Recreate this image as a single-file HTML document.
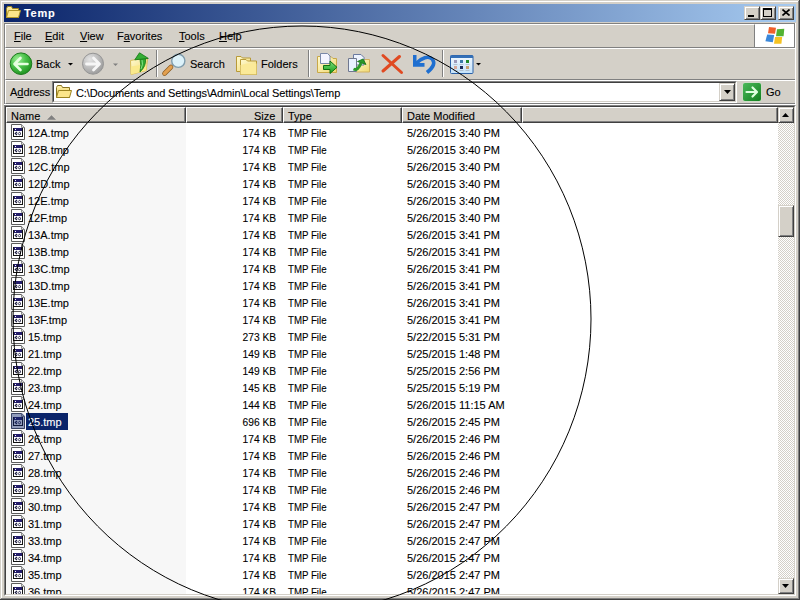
<!DOCTYPE html>
<html><head><meta charset="utf-8">
<style>
*{margin:0;padding:0;box-sizing:border-box}
html,body{width:800px;height:600px;overflow:hidden}
body{position:relative;background:#D4D0C8;font-family:"Liberation Sans",sans-serif;font-size:11px;color:#000;-webkit-text-stroke:0.1px currentColor}
.a{position:absolute}
.t{position:absolute;white-space:nowrap;line-height:13px;height:13px}
.u{text-decoration:underline}
.row{position:absolute;left:6px;width:772px;height:17px}
.row .ico{position:absolute;left:4px;top:1px}
.row span{position:absolute;top:4px;line-height:13px;white-space:nowrap}
.nm{left:22px;padding:0 1px 0 0}
.nm.s{color:#fff}
.selbox{position:absolute;left:20px;top:1px;width:42px;height:17px;background:#0A246A}
.tint{position:absolute;left:4px;top:1px}
.sz{right:502px;text-align:right;transform:scaleX(0.93);transform-origin:100% 50%}
.tp{left:282px;transform:scaleX(0.88);transform-origin:0 50%}
.dt{left:401px}
.hd{position:absolute;top:107px;height:16px;border-top:1px solid #fff;border-left:1px solid #fff;border-bottom:1px solid #404040;border-right:1px solid #404040;box-shadow:inset -1px -1px 0 #808080}
.btn{position:absolute;background:#D4D0C8;border:1px solid;border-color:#D4D0C8 #404040 #404040 #D4D0C8;box-shadow:inset 1px 1px 0 #fff,inset -1px -1px 0 #808080}
.sep{position:absolute;width:2px;border-left:1px solid #808080;border-right:1px solid #fff}
</style></head>
<body>
<svg width="0" height="0" style="position:absolute">
<defs>
<linearGradient id="yel" x1="0" y1="0" x2="0" y2="1"><stop offset="0" stop-color="#FFF3B0"/><stop offset="1" stop-color="#E8C24A"/></linearGradient>
<symbol id="fi" viewBox="0 0 16 16">
<path d="M1.5 0.5H11.5L14.5 3.5V15.5H1.5Z" fill="#fff" stroke="#5c5c5c"/>
<path d="M11.5 0.5V3.5H14.5" fill="#dcdcdc" stroke="#8a8a8a"/>
<g shape-rendering="crispEdges">
<rect x="3" y="4" width="10" height="9" fill="#fff"/>
<rect x="3" y="4" width="10" height="3" fill="#231C6A"/>
<rect x="5" y="5" width="1" height="1" fill="#fff"/>
<rect x="3" y="12" width="10" height="1" fill="#111"/>
<rect x="3" y="4" width="1" height="9" fill="#111"/>
<rect x="12" y="4" width="1" height="9" fill="#111"/>
</g>
<path d="M7 8L5.2 9.5L7 11" fill="none" stroke="#1a1a40" stroke-width="1.1"/>
<path d="M9.5 8.2L11 9.6L9.5 11L8.1 9.6Z" fill="none" stroke="#1a1a40" stroke-width="1"/>
</symbol>
</defs>
</svg>

<!-- window frame -->
<div class="a" style="left:1px;top:1px;width:797px;height:1px;background:#fff"></div>
<div class="a" style="left:1px;top:1px;width:1px;height:597px;background:#fff"></div>
<div class="a" style="left:798px;top:1px;width:1px;height:598px;background:#808080"></div>
<div class="a" style="left:799px;top:0;width:1px;height:600px;background:#404040"></div>
<div class="a" style="left:1px;top:598px;width:798px;height:1px;background:#808080"></div>
<div class="a" style="left:0;top:599px;width:800px;height:1px;background:#404040"></div>

<!-- title bar -->
<div class="a" style="left:4px;top:4px;width:792px;height:18px;background:linear-gradient(to right,#0A246A,#A6CAF0)"></div>
<svg class="a" style="left:5px;top:5px" width="17" height="15" viewBox="0 0 17 15">
<path d="M1.5 3.5L2.5 1.5H6.5L7.5 3.5H13.5V12.5H1.5Z" fill="url(#yel)" stroke="#9C8420"/>
<path d="M1.5 12.5L3.5 5.5H15.5L13.5 12.5Z" fill="#FCE68A" stroke="#B0962A"/>
</svg>
<div class="t" style="left:24px;top:7px;color:#fff;font-weight:bold;letter-spacing:0.7px">Temp</div>
<div class="btn" style="left:744px;top:6px;width:16px;height:14px"><div class="a" style="left:3px;top:8px;width:6px;height:2px;background:#000"></div></div>
<div class="btn" style="left:760px;top:6px;width:16px;height:14px"><div class="a" style="left:2px;top:1px;width:9px;height:9px;border:1px solid #000;border-top-width:2px"></div></div>
<div class="btn" style="left:778px;top:6px;width:16px;height:14px"><svg class="a" style="left:3px;top:2px" width="8" height="7"><path d="M0.5 0.5L7.5 6.5M7.5 0.5L0.5 6.5" stroke="#000" stroke-width="1.6"/></svg></div>

<!-- rebar sunken border -->
<div class="a" style="left:4px;top:23px;width:792px;height:1px;background:#808080"></div>
<div class="a" style="left:4px;top:23px;width:1px;height:81px;background:#808080"></div>
<div class="a" style="left:795px;top:23px;width:1px;height:82px;background:#fff"></div>
<div class="a" style="left:4px;top:104px;width:792px;height:1px;background:#fff"></div>
<!-- bands -->
<div class="a" style="left:5px;top:24px;width:750px;height:24px;border-top:1px solid #fff;border-left:1px solid #fff;border-bottom:1px solid #808080;border-right:1px solid #808080"></div>
<div class="a" style="left:5px;top:48px;width:790px;height:32px;border-top:1px solid #fff;border-left:1px solid #fff;border-bottom:1px solid #808080"></div>
<div class="a" style="left:5px;top:80px;width:790px;height:24px;border-top:1px solid #fff;border-left:1px solid #fff;border-bottom:1px solid #808080"></div>

<!-- menu -->
<div class="t" style="left:14px;top:30px"><span class="u">F</span>ile</div>
<div class="t" style="left:45px;top:30px"><span class="u">E</span>dit</div>
<div class="t" style="left:80px;top:30px"><span class="u">V</span>iew</div>
<div class="t" style="left:117px;top:30px">F<span class="u">a</span>vorites</div>
<div class="t" style="left:179px;top:30px"><span class="u">T</span>ools</div>
<div class="t" style="left:219px;top:30px"><span class="u">H</span>elp</div>
<!-- throbber -->
<div class="a" style="left:755px;top:23px;width:40px;height:25px;background:#fff;border-top:1px solid #808080;border-bottom:1px solid #808080;border-right:1px solid #808080"></div>
<svg class="a" style="left:760px;top:22px" width="30" height="26" viewBox="0 0 30 26">
<path d="M9 5L16 5.8L15 11.8L8 11.2Z" fill="#F0602C"/>
<path d="M17 7.3L24.3 6.8L23.6 14.2L16 14.2Z" fill="#52B232"/>
<path d="M7.2 12.4L14.2 13L12.8 20.2L5.4 19.3Z" fill="#3B88DA"/>
<path d="M15 14.9L22.2 14.9L21.4 21.7L14 21.7Z" fill="#F5C222"/>
</svg>

<!-- toolbar -->
<svg class="a" style="left:0;top:0" width="500" height="80" viewBox="0 0 500 80">
<defs>
<radialGradient id="gb" cx="0.35" cy="0.3" r="0.75"><stop offset="0" stop-color="#A0F098"/><stop offset="0.5" stop-color="#48C048"/><stop offset="1" stop-color="#1E901E"/></radialGradient>
<radialGradient id="gg" cx="0.35" cy="0.3" r="0.75"><stop offset="0" stop-color="#E4E4E4"/><stop offset="0.5" stop-color="#C0C0C0"/><stop offset="1" stop-color="#9A9A9A"/></radialGradient>
<linearGradient id="fy" x1="0" y1="0" x2="1" y2="1"><stop offset="0" stop-color="#FFFAD0"/><stop offset="1" stop-color="#F0D870"/></linearGradient>
<linearGradient id="gr" x1="0" y1="0" x2="0" y2="1"><stop offset="0" stop-color="#7FE07F"/><stop offset="1" stop-color="#169C16"/></linearGradient>
<linearGradient id="gbx" x1="0" y1="0" x2="1" y2="1"><stop offset="0" stop-color="#4FBF5F"/><stop offset="1" stop-color="#13802A"/></linearGradient>
</defs>
<!-- back -->
<circle cx="21" cy="63.7" r="10.8" fill="url(#gb)" stroke="#1D7A1D" stroke-width="1"/>
<path d="M27.5 64H15M20.5 58L14.5 64L20.5 70" fill="none" stroke="#E6FFE0" stroke-width="2.6" stroke-linecap="round" stroke-linejoin="round"/>
<path d="M68 63H73L70.5 65.5Z" fill="#000"/>
<!-- forward -->
<circle cx="93" cy="63.7" r="10.5" fill="url(#gg)" stroke="#959595" stroke-width="1"/>
<path d="M86.5 64H99M93.5 58L99.5 64L93.5 70" fill="none" stroke="#F6F6F6" stroke-width="2.8" stroke-linecap="round" stroke-linejoin="round"/>
<path d="M113 63.5H118L115.5 66Z" fill="#808080"/>
<!-- up -->
<path d="M130.5 60.5L136 59.5L147.5 58.8L146.2 70.5L131 74.5Z" fill="url(#fy)" stroke="#D8BC58" stroke-width="1"/>
<path d="M131 66.5L146.5 64L146.2 70.5L131 74.5Z" fill="#FAE98C"/>
<path d="M140 59L145.5 58.5Q146.5 66 140 72Q141.5 65 140 59Z" fill="#2FA82F" stroke="#177A17" stroke-width="0.8" stroke-linejoin="round"/>
<path d="M142 60Q143.5 64 141 69" fill="none" stroke="#88E088" stroke-width="1"/>
<path d="M139.5 52.8L134.8 59.8L148.3 58.4Z" fill="#34AE34" stroke="#187C18" stroke-width="0.9" stroke-linejoin="round"/>
<!-- sep -->
<rect x="156" y="50" width="1" height="27" fill="#808080"/><rect x="157" y="50" width="1" height="27" fill="#fff"/>
<!-- search -->
<path d="M164.5 73.5L171 67" stroke="#8A5A20" stroke-width="4.6" stroke-linecap="round"/>
<path d="M164.5 73.5L171 67" stroke="#E2A050" stroke-width="3.2" stroke-linecap="round"/>
<circle cx="178.3" cy="60.8" r="6.6" fill="#DDF2FA" stroke="#7F9CAC" stroke-width="1.4"/>
<!-- folders -->
<path d="M236.5 56.5H241L242.5 58H250.5V71.5H236.5Z" fill="url(#fy)" stroke="#B89A38" stroke-width="1"/>
<path d="M240.5 59.5H246L247.5 61H256.5V74.5H240.5Z" fill="url(#fy)" stroke="#B89A38" stroke-width="1"/>
<path d="M240.5 65L247 63.5H256.5V74.5H240.5Z" fill="#FBEA98"/>
<!-- sep -->
<rect x="308" y="50" width="1" height="27" fill="#808080"/><rect x="309" y="50" width="1" height="27" fill="#fff"/>
<!-- move to -->
<path d="M317.5 56.5H331L333 58.5H336.5V72.5H317.5Z" fill="url(#fy)" stroke="#C8A848" stroke-width="1"/>
<path d="M320.5 53.5H327.5L330 56V63.5H320.5Z" fill="#F4F4FF" stroke="#7A88A8" stroke-width="1"/>
<path d="M323.5 65.5H330V61L337 67.3L330 73.5V69.5H323.5Z" fill="url(#gr)" stroke="#107010" stroke-width="1" stroke-linejoin="round"/>
<!-- copy to -->
<path d="M355.5 59.5H369.5V72H355.5Z" fill="url(#fy)" stroke="#D0B060" stroke-width="1"/>
<path d="M353.5 54.5H361L364 57.5V65H353.5Z" fill="#EEF4FF" stroke="#6A7AA0" stroke-width="1"/>
<path d="M348.5 58.5H356.5V71.5H348.5Z" fill="#E8F2FF" stroke="#707890" stroke-width="1"/>
<path d="M353.5 69Q358 71 361 63" fill="none" stroke="#2A9A2A" stroke-width="3"/>
<path d="M357.5 61.5L363 59L366 64.5Z" fill="#2A9A2A" stroke="#107010" stroke-width="0.8"/>
<!-- delete -->
<path d="M383 55.5L401.5 72.5M399.5 56.5L383 71" stroke="#E04A22" stroke-width="3" stroke-linecap="round"/>
<!-- undo -->
<path d="M416 63.5C421 58 429 55 432.5 59.5C435.5 63.5 432 68.5 427 72.5" fill="none" stroke="#1F6FD0" stroke-width="3.6"/>
<path d="M413 55H416.5V63H424.5V66.8H413Z" fill="#1F6FD0"/>
<!-- sep -->
<rect x="442" y="50" width="1" height="27" fill="#808080"/><rect x="443" y="50" width="1" height="27" fill="#fff"/>
<!-- views -->
<linearGradient id="vw" x1="0" y1="0" x2="0" y2="1"><stop offset="0" stop-color="#F2F9FF"/><stop offset="1" stop-color="#C4E2FA"/></linearGradient>
<rect x="450.5" y="55.5" width="22.5" height="18" rx="1" fill="url(#vw)" stroke="#2C62A8" stroke-width="1"/>
<rect x="450.5" y="55.5" width="22.5" height="2.5" fill="#3470B8"/>
<rect x="454" y="60" width="3" height="3" fill="#9C9ABA"/><rect x="460" y="60" width="3" height="3" fill="#3A7AA8"/><rect x="466" y="60" width="3" height="3" fill="#1F8A2A"/>
<rect x="454" y="66" width="3" height="3" fill="#D8A898"/><rect x="460" y="66" width="3" height="3" fill="#1A2A5A"/><rect x="466" y="66" width="3" height="3" fill="#C8A070"/>
<g fill="#A8B8C8"><rect x="453.5" y="64" width="4" height="0.8"/><rect x="459.5" y="64" width="4" height="0.8"/><rect x="465.5" y="64" width="4" height="0.8"/><rect x="453.5" y="70" width="4" height="0.8"/><rect x="459.5" y="70" width="4" height="0.8"/><rect x="465.5" y="70" width="4" height="0.8"/></g>
<path d="M476 63H481L478.5 65.5Z" fill="#000"/>
</svg>
<div class="t" style="left:36px;top:58px">Back</div>
<div class="t" style="left:190px;top:58px">Search</div>
<div class="t" style="left:261px;top:58px">Folders</div>

<!-- address bar -->
<div class="t" style="left:10px;top:86px">A<span class="u">d</span>dress</div>
<div class="a" style="left:52px;top:81px;width:685px;height:22px;background:#fff;border-top:1px solid #808080;border-left:1px solid #808080;border-bottom:1px solid #fff;border-right:1px solid #fff"></div>
<div class="a" style="left:53px;top:82px;width:683px;height:20px;border-top:1px solid #404040;border-left:1px solid #404040;border-bottom:1px solid #D4D0C8;border-right:1px solid #D4D0C8"></div>
<svg class="a" style="left:55px;top:84px" width="18" height="15" viewBox="0 0 18 15">
<path d="M1.5 3.5L2.5 1.5H6.5L7.5 3.5H14.5V13.5H1.5Z" fill="url(#yel)" stroke="#8A7420"/>
<path d="M1.5 13.5L3.5 6.5H16.5L14.5 13.5Z" fill="#FCE68A" stroke="#9C8420"/>
</svg>
<div class="t" style="left:76px;top:87px;letter-spacing:-0.12px">C:\Documents and Settings\Admin\Local Settings\Temp</div>
<div class="btn" style="left:719px;top:83px;width:16px;height:18px"><svg class="a" style="left:4px;top:6px" width="7" height="4"><path d="M0 0H7L3.5 4Z" fill="#000"/></svg></div>
<svg class="a" style="left:742px;top:82px" width="20" height="20" viewBox="0 0 20 20">
<rect x="0.5" y="0.5" width="19" height="19" rx="2.5" fill="#C8F0C8" opacity="0.7"/>
<rect x="1" y="1" width="18" height="18" rx="2" fill="url(#gbx2)"/>
<path d="M4.5 10H14.5M10.5 5.5L15 10L10.5 14.5" fill="none" stroke="#DFFFDF" stroke-width="2.2" stroke-linecap="round" stroke-linejoin="round"/>
<defs><linearGradient id="gbx2" x1="0" y1="0" x2="1" y2="1"><stop offset="0" stop-color="#4CB85A"/><stop offset="1" stop-color="#12801F"/></linearGradient></defs>
</svg>

<div class="t" style="left:766px;top:86px">Go</div>

<!-- list view frame -->
<div class="a" style="left:4px;top:105px;width:792px;height:491px;border-top:1px solid #808080;border-left:1px solid #808080;border-bottom:1px solid #fff;border-right:1px solid #fff"></div>
<div class="a" style="left:5px;top:106px;width:790px;height:489px;background:#fff;border-top:1px solid #404040;border-left:1px solid #404040;border-bottom:1px solid #D4D0C8;border-right:1px solid #D4D0C8"></div>
<div class="a" style="left:6px;top:123px;width:180px;height:471px;background:#F7F7F7"></div>

<!-- rows -->
<div class="a" style="left:0;top:0;width:778px;height:594px;overflow:hidden">
<div class="row" style="top:123px"><svg class="ico" width="16" height="16"><use href="#fi"/></svg><span class="nm">12A.tmp</span><span class="sz">174 KB</span><span class="tp">TMP File</span><span class="dt">5/26/2015 3:40 PM</span></div>
<div class="row" style="top:140px"><svg class="ico" width="16" height="16"><use href="#fi"/></svg><span class="nm">12B.tmp</span><span class="sz">174 KB</span><span class="tp">TMP File</span><span class="dt">5/26/2015 3:40 PM</span></div>
<div class="row" style="top:157px"><svg class="ico" width="16" height="16"><use href="#fi"/></svg><span class="nm">12C.tmp</span><span class="sz">174 KB</span><span class="tp">TMP File</span><span class="dt">5/26/2015 3:40 PM</span></div>
<div class="row" style="top:174px"><svg class="ico" width="16" height="16"><use href="#fi"/></svg><span class="nm">12D.tmp</span><span class="sz">174 KB</span><span class="tp">TMP File</span><span class="dt">5/26/2015 3:40 PM</span></div>
<div class="row" style="top:191px"><svg class="ico" width="16" height="16"><use href="#fi"/></svg><span class="nm">12E.tmp</span><span class="sz">174 KB</span><span class="tp">TMP File</span><span class="dt">5/26/2015 3:40 PM</span></div>
<div class="row" style="top:208px"><svg class="ico" width="16" height="16"><use href="#fi"/></svg><span class="nm">12F.tmp</span><span class="sz">174 KB</span><span class="tp">TMP File</span><span class="dt">5/26/2015 3:40 PM</span></div>
<div class="row" style="top:225px"><svg class="ico" width="16" height="16"><use href="#fi"/></svg><span class="nm">13A.tmp</span><span class="sz">174 KB</span><span class="tp">TMP File</span><span class="dt">5/26/2015 3:41 PM</span></div>
<div class="row" style="top:242px"><svg class="ico" width="16" height="16"><use href="#fi"/></svg><span class="nm">13B.tmp</span><span class="sz">174 KB</span><span class="tp">TMP File</span><span class="dt">5/26/2015 3:41 PM</span></div>
<div class="row" style="top:259px"><svg class="ico" width="16" height="16"><use href="#fi"/></svg><span class="nm">13C.tmp</span><span class="sz">174 KB</span><span class="tp">TMP File</span><span class="dt">5/26/2015 3:41 PM</span></div>
<div class="row" style="top:276px"><svg class="ico" width="16" height="16"><use href="#fi"/></svg><span class="nm">13D.tmp</span><span class="sz">174 KB</span><span class="tp">TMP File</span><span class="dt">5/26/2015 3:41 PM</span></div>
<div class="row" style="top:293px"><svg class="ico" width="16" height="16"><use href="#fi"/></svg><span class="nm">13E.tmp</span><span class="sz">174 KB</span><span class="tp">TMP File</span><span class="dt">5/26/2015 3:41 PM</span></div>
<div class="row" style="top:310px"><svg class="ico" width="16" height="16"><use href="#fi"/></svg><span class="nm">13F.tmp</span><span class="sz">174 KB</span><span class="tp">TMP File</span><span class="dt">5/26/2015 3:41 PM</span></div>
<div class="row" style="top:327px"><svg class="ico" width="16" height="16"><use href="#fi"/></svg><span class="nm">15.tmp</span><span class="sz">273 KB</span><span class="tp">TMP File</span><span class="dt">5/22/2015 5:31 PM</span></div>
<div class="row" style="top:344px"><svg class="ico" width="16" height="16"><use href="#fi"/></svg><span class="nm">21.tmp</span><span class="sz">149 KB</span><span class="tp">TMP File</span><span class="dt">5/25/2015 1:48 PM</span></div>
<div class="row" style="top:361px"><svg class="ico" width="16" height="16"><use href="#fi"/></svg><span class="nm">22.tmp</span><span class="sz">149 KB</span><span class="tp">TMP File</span><span class="dt">5/25/2015 2:56 PM</span></div>
<div class="row" style="top:378px"><svg class="ico" width="16" height="16"><use href="#fi"/></svg><span class="nm">23.tmp</span><span class="sz">145 KB</span><span class="tp">TMP File</span><span class="dt">5/25/2015 5:19 PM</span></div>
<div class="row" style="top:395px"><svg class="ico" width="16" height="16"><use href="#fi"/></svg><span class="nm">24.tmp</span><span class="sz">144 KB</span><span class="tp">TMP File</span><span class="dt">5/26/2015 11:15 AM</span></div>
<div class="row" style="top:412px"><div class="selbox"></div><svg class="ico sel" width="16" height="16"><use href="#fi"/></svg><svg class="tint" width="16" height="16"><path d="M1 0H12L15 3V16H1Z" fill="#0A246A" opacity="0.45"/></svg><span class="nm s">25.tmp</span><span class="sz">696 KB</span><span class="tp">TMP File</span><span class="dt">5/26/2015 2:45 PM</span></div>
<div class="row" style="top:429px"><svg class="ico" width="16" height="16"><use href="#fi"/></svg><span class="nm">26.tmp</span><span class="sz">174 KB</span><span class="tp">TMP File</span><span class="dt">5/26/2015 2:46 PM</span></div>
<div class="row" style="top:446px"><svg class="ico" width="16" height="16"><use href="#fi"/></svg><span class="nm">27.tmp</span><span class="sz">174 KB</span><span class="tp">TMP File</span><span class="dt">5/26/2015 2:46 PM</span></div>
<div class="row" style="top:463px"><svg class="ico" width="16" height="16"><use href="#fi"/></svg><span class="nm">28.tmp</span><span class="sz">174 KB</span><span class="tp">TMP File</span><span class="dt">5/26/2015 2:46 PM</span></div>
<div class="row" style="top:480px"><svg class="ico" width="16" height="16"><use href="#fi"/></svg><span class="nm">29.tmp</span><span class="sz">174 KB</span><span class="tp">TMP File</span><span class="dt">5/26/2015 2:46 PM</span></div>
<div class="row" style="top:497px"><svg class="ico" width="16" height="16"><use href="#fi"/></svg><span class="nm">30.tmp</span><span class="sz">174 KB</span><span class="tp">TMP File</span><span class="dt">5/26/2015 2:47 PM</span></div>
<div class="row" style="top:514px"><svg class="ico" width="16" height="16"><use href="#fi"/></svg><span class="nm">31.tmp</span><span class="sz">174 KB</span><span class="tp">TMP File</span><span class="dt">5/26/2015 2:47 PM</span></div>
<div class="row" style="top:531px"><svg class="ico" width="16" height="16"><use href="#fi"/></svg><span class="nm">33.tmp</span><span class="sz">174 KB</span><span class="tp">TMP File</span><span class="dt">5/26/2015 2:47 PM</span></div>
<div class="row" style="top:548px"><svg class="ico" width="16" height="16"><use href="#fi"/></svg><span class="nm">34.tmp</span><span class="sz">174 KB</span><span class="tp">TMP File</span><span class="dt">5/26/2015 2:47 PM</span></div>
<div class="row" style="top:565px"><svg class="ico" width="16" height="16"><use href="#fi"/></svg><span class="nm">35.tmp</span><span class="sz">174 KB</span><span class="tp">TMP File</span><span class="dt">5/26/2015 2:47 PM</span></div>
<div class="row" style="top:582px"><svg class="ico" width="16" height="16"><use href="#fi"/></svg><span class="nm">36.tmp</span><span class="sz">174 KB</span><span class="tp">TMP File</span><span class="dt">5/26/2015 2:47 PM</span></div>
</div>

<!-- header -->
<div class="hd" style="left:6px;width:180px;background:#D4D0C8"></div>
<div class="hd" style="left:186px;width:97px;background:#D4D0C8"></div>
<div class="hd" style="left:283px;width:119px;background:#D4D0C8"></div>
<div class="hd" style="left:402px;width:120px;background:#D4D0C8"></div>
<div class="hd" style="left:522px;width:256px;background:#D4D0C8"></div>
<div class="t" style="left:11px;top:110px">Name</div>
<svg class="a" style="left:47px;top:115px" width="9" height="5"><path d="M0.5 4.5L4.5 0.5L8.5 4.5Z" fill="#808080" stroke="#808080" stroke-width="0.5"/></svg>
<div class="t" style="left:254px;top:110px">Size</div>
<div class="t" style="left:288px;top:110px">Type</div>
<div class="t" style="left:407px;top:110px">Date Modified</div>

<!-- scrollbar -->
<div class="a" style="left:778px;top:107px;width:16px;height:487px;background-color:#fff;background-image:linear-gradient(45deg,#D4D0C8 25%,transparent 25%,transparent 75%,#D4D0C8 75%),linear-gradient(45deg,#D4D0C8 25%,transparent 25%,transparent 75%,#D4D0C8 75%);background-size:2px 2px;background-position:0 0,1px 1px"></div>
<div class="btn" style="left:778px;top:107px;width:16px;height:16px"><svg class="a" style="left:3px;top:5px" width="7" height="4"><path d="M0 4H7L3.5 0Z" fill="#000"/></svg></div>
<div class="btn" style="left:778px;top:205px;width:16px;height:32px"></div>
<div class="btn" style="left:778px;top:578px;width:16px;height:16px"><svg class="a" style="left:3px;top:5px" width="7" height="4"><path d="M0 0H7L3.5 4Z" fill="#000"/></svg></div>

<!-- ellipse overlay -->
<svg class="a" style="left:0;top:0" width="800" height="600"><ellipse cx="302" cy="319" rx="289" ry="293" fill="none" stroke="#000" stroke-width="1"/></svg>
</body></html>
